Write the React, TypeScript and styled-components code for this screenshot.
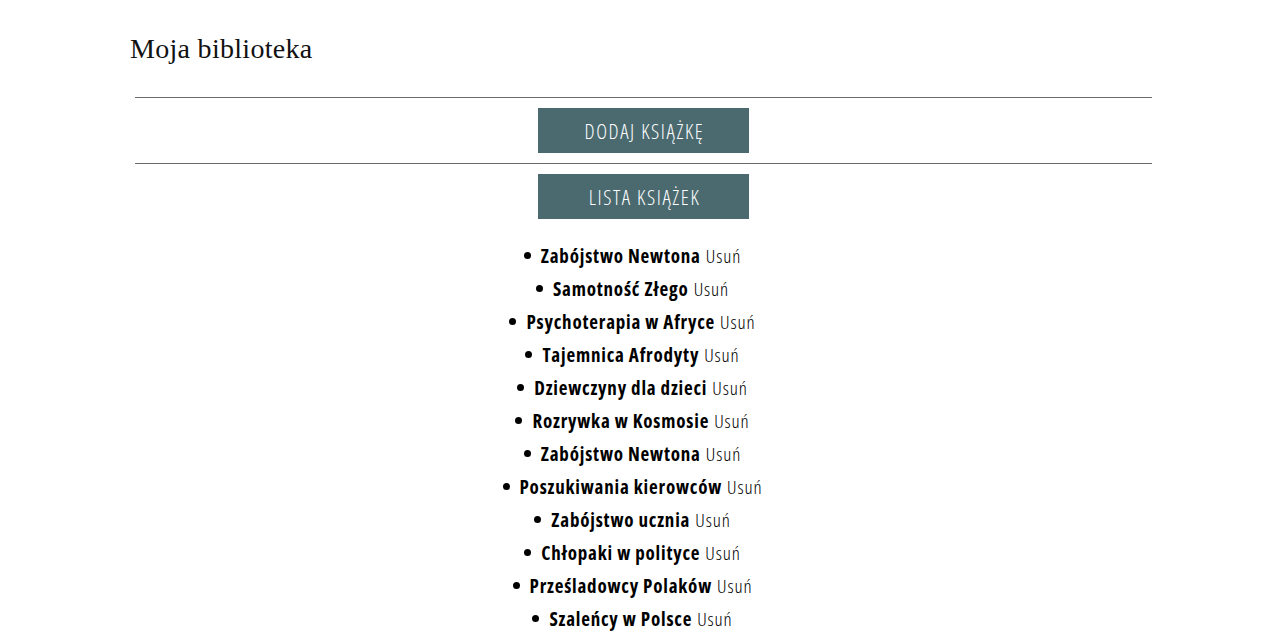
import React from "react";
import styled, { createGlobalStyle } from "styled-components";

const GlobalStyle = createGlobalStyle`
  html, body { margin: 0; padding: 0; background: #ffffff; }
  body { font-family: "Open Sans", "Noto Sans", sans-serif; color: #000; }
`;

const Page = styled.div`
  width: 1017px;
  margin: 0 auto;
  padding-top: 30px;
`;

const Title = styled.h1`
  margin: 0 0 0 -5px;
  font-family: "Liberation Serif", "Times New Roman", serif;
  font-weight: 400;
  font-size: 28px;
  line-height: 38px;
  letter-spacing: 0.3px;
  color: #111;
`;

const Rule = styled.hr`
  align-self: stretch;
  margin: 0;
  border: 0;
  border-top: 1px solid #6b6b6b;
`;

const Section = styled.section<{ $top: number }>`
  display: flex;
  flex-direction: column;
  align-items: center;
  margin-top: ${(p) => p.$top}px;
`;

const Button = styled.button`
  width: 211px;
  height: 45px;
  margin: 10px 0;
  padding: 0 0 0 2px;
  border: 0;
  background: #4a6a70;
  color: #ffffff;
  font-family: "Open Sans", sans-serif;
  font-stretch: 75%;
  font-weight: 300;
  font-size: 20.5px;
  text-transform: uppercase;
  letter-spacing: 1.6px;
  cursor: pointer;
`;

const List = styled.ul`
  margin: 10px 0 0;
  padding: 0 22px 0 0;
  list-style: none;
  display: flex;
  flex-direction: column;
  align-items: center;
`;

const Item = styled.li`
  display: flex;
  align-items: center;
  gap: 5px;
  height: 33px;
  font-size: 19px;
  font-stretch: 75%;
  &::before {
    content: "";
    width: 7px;
    height: 7px;
    border-radius: 50%;
    background: #000;
    margin-right: 5px;
  }
`;

const BookTitle = styled.strong`
  font-weight: 700;
  letter-spacing: 0.8px;
`;

const Remove = styled.span`
  font-weight: 300;
  letter-spacing: 0.9px;
  cursor: pointer;
`;

const books = [
  "Zabójstwo Newtona",
  "Samotność Złego",
  "Psychoterapia w Afryce",
  "Tajemnica Afrodyty",
  "Dziewczyny dla dzieci",
  "Rozrywka w Kosmosie",
  "Zabójstwo Newtona",
  "Poszukiwania kierowców",
  "Zabójstwo ucznia",
  "Chłopaki w polityce",
  "Prześladowcy Polaków",
  "Szaleńcy w Polsce",
];

export default function App() {
  return (
    <>
      <GlobalStyle />
      <Page>
        <Title>Moja biblioteka</Title>
        <Section $top={29}>
          <Rule />
          <Button>Dodaj książkę</Button>
          <Rule />
          <Button>Lista książek</Button>
          <List>
            {books.map((b, i) => (
              <Item key={i}>
                <BookTitle>{b}</BookTitle>
                <Remove>Usuń</Remove>
              </Item>
            ))}
          </List>
        </Section>
      </Page>
    </>
  );
}
